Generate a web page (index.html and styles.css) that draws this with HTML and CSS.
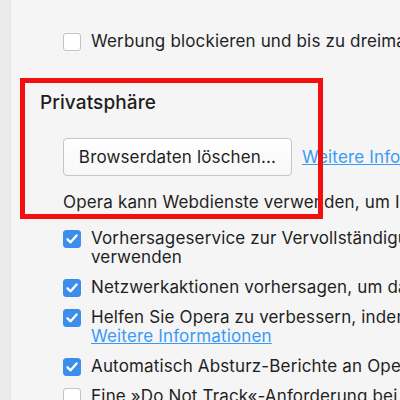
FILE: index.html
```html
<!DOCTYPE html>
<html>
<head>
<meta charset="utf-8">
<link rel="stylesheet" href="styles.css">
</head>
<body>
<div class="page">
  <div class="rail"></div>
  <div class="main">
    <section class="section first">
      <h2 class="heading">Werbung blockieren</h2>
      <label class="row">
        <span class="box"></span>
        <span class="text">Werbung blockieren und bis zu dreimal schneller surfen</span>
      </label>
    </section>
    <section class="section privacy">
      <h2 class="heading">Privatsphäre</h2>
      <div class="actions">
        <button class="btn">Browserdaten löschen...</button>
        <a class="link" href="#">Weitere Informationen</a>
      </div>
      <p class="desc">Opera kann Webdienste verwenden, um Ihr Browser-Erlebnis zu verbessern.</p>
      <label class="row">
        <span class="box checked"><svg viewBox="0 0 18 18" width="18" height="18"><path d="M4.5 9.3 L7.6 12.3 L13.6 5.4" fill="none" stroke="#fff" stroke-width="2.3" stroke-linecap="round" stroke-linejoin="round"/></svg></span>
        <span class="text">Vorhersageservice zur Vervollständigung<br>verwenden</span>
      </label>
      <label class="row">
        <span class="box checked"><svg viewBox="0 0 18 18" width="18" height="18"><path d="M4.5 9.3 L7.6 12.3 L13.6 5.4" fill="none" stroke="#fff" stroke-width="2.3" stroke-linecap="round" stroke-linejoin="round"/></svg></span>
        <span class="text">Netzwerkaktionen vorhersagen, um das Laden</span>
      </label>
      <label class="row">
        <span class="box checked"><svg viewBox="0 0 18 18" width="18" height="18"><path d="M4.5 9.3 L7.6 12.3 L13.6 5.4" fill="none" stroke="#fff" stroke-width="2.3" stroke-linecap="round" stroke-linejoin="round"/></svg></span>
        <span class="text">Helfen Sie Opera zu verbessern, indem<br><a class="link" href="#">Weitere Informationen</a></span>
      </label>
      <label class="row">
        <span class="box checked"><svg viewBox="0 0 18 18" width="18" height="18"><path d="M4.5 9.3 L7.6 12.3 L13.6 5.4" fill="none" stroke="#fff" stroke-width="2.3" stroke-linecap="round" stroke-linejoin="round"/></svg></span>
        <span class="text">Automatisch Absturz-Berichte an Opera senden</span>
      </label>
      <label class="row">
        <span class="box"></span>
        <span class="text">Eine »Do Not Track«-Anforderung bei Browsing</span>
      </label>
    </section>
  </div>
  <div class="highlight"></div>
</div>
</body>
</html>
```
FILE: styles.css
```css
html, body {
  margin: 0;
  padding: 0;
  width: 400px;
  height: 400px;
  overflow: hidden;
  background: #f5f5f5;
}
.page {
  position: relative;
  display: flex;
  height: 400px;
  font-family: Inter, "Noto Sans", sans-serif;
  color: #1f1f1f;
}
.rail {
  width: 10px;
  flex: none;
  background: #ebebeb;
  border-right: 1px solid #e4e4e4;
}
.main {
  flex: 1;
  padding-left: 29px;
  margin-top: -22px;
  white-space: nowrap;
  letter-spacing: 0.15px;
}
.heading {
  margin: 0;
  font-size: 19px;
  font-weight: 500;
  line-height: 24px;
  letter-spacing: 0.1px;
}
.section.first .row {
  margin-top: 30px;
}
.section.privacy {
  margin-top: 40px;
}
.row {
  display: flex;
  align-items: flex-start;
  margin-left: 23px;
  margin-bottom: 11px;
  font-size: 17px;
  line-height: 19px;
}
.box {
  width: 16px;
  height: 16px;
  flex: none;
  margin-top: 1px;
  margin-right: 10px;
  border: 1px solid #c4c4c4;
  border-radius: 3px;
  background: #fff;
  position: relative;
}
.box.checked {
  background: #3b8eea;
  border-color: #3b8eea;
}
.box svg {
  position: absolute;
  left: -1px;
  top: -1px;
}
.actions {
  display: flex;
  align-items: center;
  margin: 23px 0 0 23px;
}
.btn {
  height: 38px;
  width: 229px;
  font-family: inherit;
  font-size: 17px;
  letter-spacing: 0.15px;
  color: #1f1f1f;
  background: linear-gradient(#ffffff, #f7f7f7);
  border: 1px solid #c6c6c6;
  border-radius: 4px;
  padding: 0;
  margin-right: 10px;
}
.link {
  color: #3a9af5;
  text-decoration: underline;
  font-size: 17px;
}
.desc {
  margin: 17px 0 17px 23px;
  font-size: 17px;
  line-height: 19px;
}
.highlight {
  position: absolute;
  left: 20px;
  top: 78px;
  width: 293px;
  height: 131px;
  border: 5px solid #f40f0f;
  pointer-events: none;
}
```
